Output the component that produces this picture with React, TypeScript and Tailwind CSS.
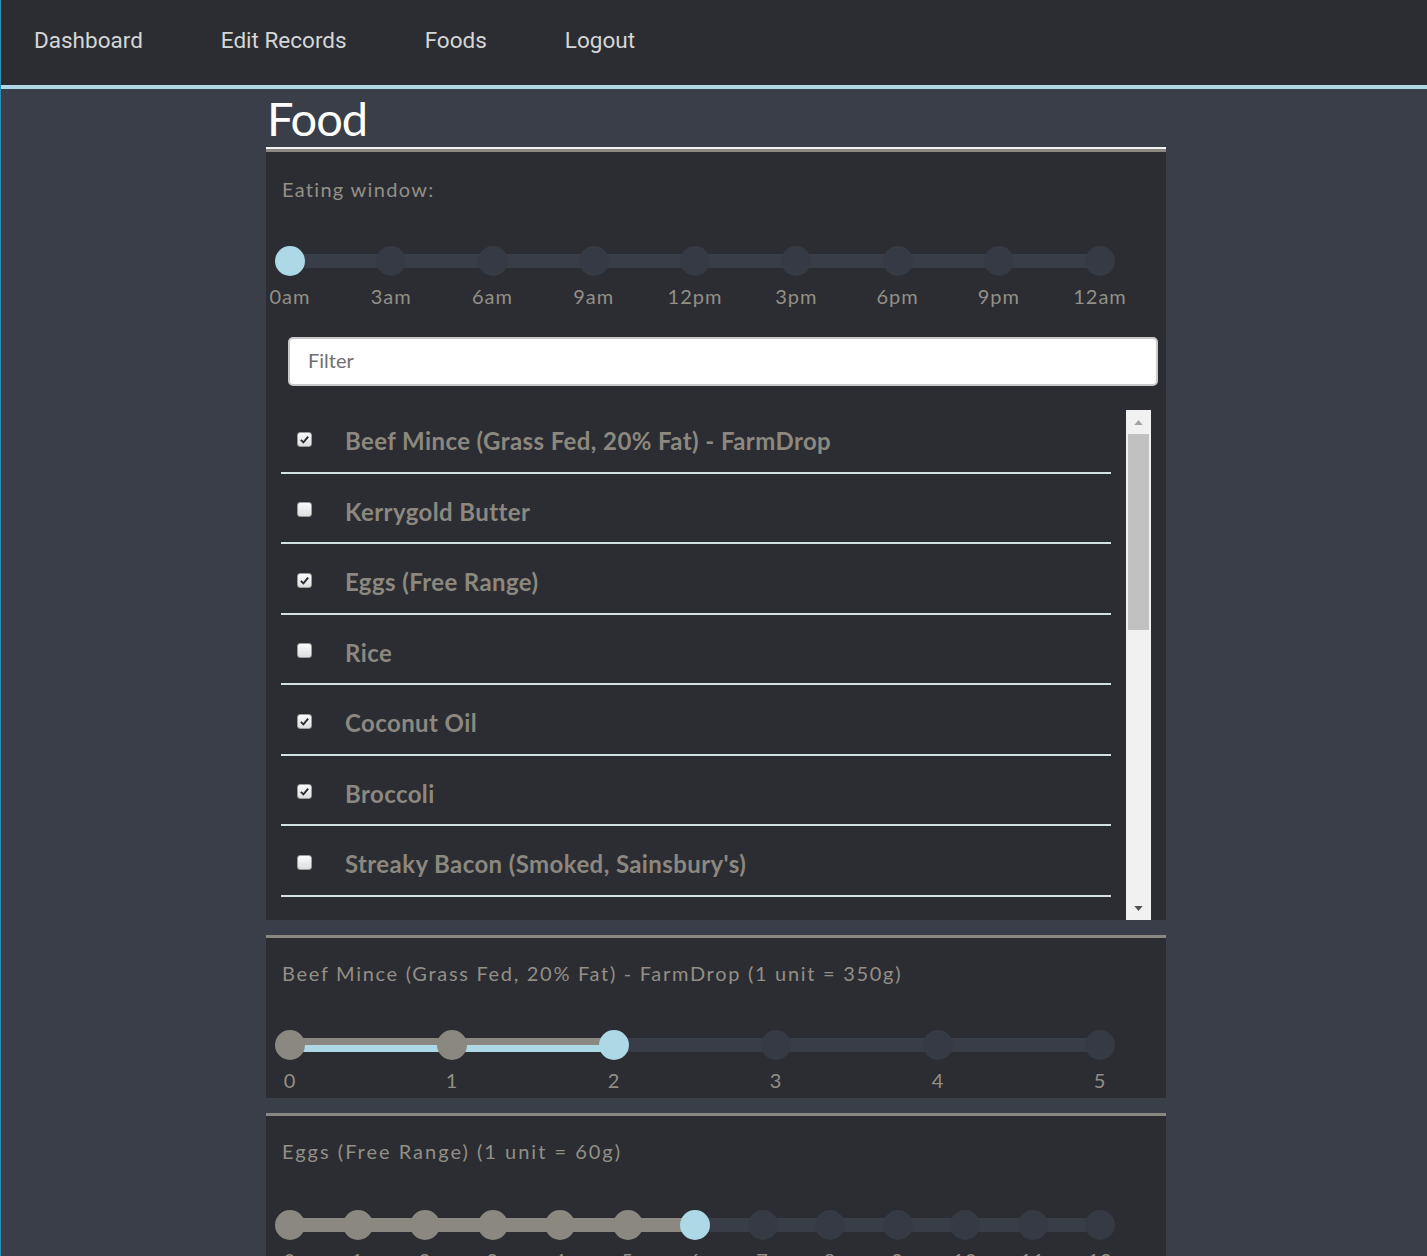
import React from 'react';

const font = "font-['Lato',sans-serif]";

const navLinks = ['Dashboard', 'Edit Records', 'Foods', 'Logout'];

const hours = ['0am', '3am', '6am', '9am', '12pm', '3pm', '6pm', '9pm', '12am'];

const foods = [
  { name: 'Beef Mince (Grass Fed, 20% Fat) - FarmDrop', checked: true },
  { name: 'Kerrygold Butter', checked: false },
  { name: 'Eggs (Free Range)', checked: true },
  { name: 'Rice', checked: false },
  { name: 'Coconut Oil', checked: true },
  { name: 'Broccoli', checked: true },
  { name: "Streaky Bacon (Smoked, Sainsbury's)", checked: false },
];

interface SliderProps {
  labels: string[];
  value: number;
  stripe?: boolean;
}

const Slider = ({ labels, value, stripe }: SliderProps) => {
  const frac = value / (labels.length - 1);
  return (
    <div className="ml-[9px] mr-[51px]">
      <div className="relative h-[30px]">
        <div className="absolute left-[15px] right-[15px] top-[8px] h-[14px] bg-[#393d47]" />
        {value > 0 && (
          <div
            className="absolute left-[15px] top-[8px] h-[14px] bg-[#8a8880]"
            style={{ width: `calc((100% - 30px) * ${frac})` }}
          >
            {stripe && <div className="absolute left-0 right-0 top-[7px] h-[7px] bg-[#add8e6]" />}
          </div>
        )}
        <div className="relative flex justify-between">
          {labels.map((l, i) => (
            <div
              key={l}
              className={
                i === value
                  ? 'h-[30px] w-[30px] rounded-full bg-[#add8e6]'
                  : i < value
                    ? 'h-[30px] w-[30px] rounded-full bg-[#8a8880]'
                    : 'h-[30px] w-[30px] rounded-full bg-[#363a44]'
              }
            />
          ))}
        </div>
      </div>
      <div className="mt-[8px] flex justify-between">
        {labels.map((l) => (
          <div key={l} className="flex w-[30px] justify-center whitespace-nowrap text-[20px] leading-[24px] tracking-[1px] text-[#948f86]">
            {l}
          </div>
        ))}
      </div>
    </div>
  );
};

const CheckBox = ({ checked }: { checked: boolean }) => (
  <span className="flex h-[15px] w-[15px] items-center justify-center rounded-[3px] border border-[#9c9c9c] bg-gradient-to-b from-[#fbfbfb] to-[#dedede]">
    {checked && (
      <svg viewBox="0 0 12 12" className="h-[11px] w-[11px]">
        <path d="M2 6.5 L4.8 9.2 L10 2.8" fill="none" stroke="#2b2b2b" strokeWidth="2" />
      </svg>
    )}
  </span>
);

const Scrollbar = () => (
  <div className="flex w-[25px] flex-col items-center bg-[#f1f1f1]">
    <div className="flex h-[24px] items-center justify-center">
      <svg viewBox="0 0 10 6" className="h-[5px] w-[9px]">
        <path d="M0 6 L5 0 L10 6 Z" fill="#a3a3a3" />
      </svg>
    </div>
    <div className="h-[196px] w-[21px] bg-[#c1c1c1]" />
    <div className="flex-1" />
    <div className="flex h-[24px] items-center justify-center">
      <svg viewBox="0 0 10 6" className="h-[5px] w-[9px]">
        <path d="M0 0 L10 0 L5 6 Z" fill="#505050" />
      </svg>
    </div>
  </div>
);

const label = 'pl-[16px] text-[20px] leading-[24px] text-[#948f86]';

export default function App() {
  return (
    <div className={`${font} min-h-screen border-l border-[#2a8fb6] bg-[#3a3e48]`}>
      <nav className="flex h-[89px] items-center gap-[78px] border-b-4 border-[#add8e6] bg-[#2b2d33] pb-[3px] pl-[33px] font-['Roboto',sans-serif] text-[22.5px] text-[#d6d6d6]">
        {navLinks.map((n) => (
          <span key={n}>{n}</span>
        ))}
      </nav>

      <main className="ml-[265px] w-[900px]">
        <h1 className="h-[58px] pl-[1px] text-[47px] leading-[58px] tracking-[-1px] text-white">Food</h1>
        <div className="h-[2px] bg-[#f2f2f2]" />

        <section className="border-t-[3px] border-[#8a8880] bg-[#2b2d33] pt-[25px]">
          <p className={`${label} tracking-[1.3px]`}>Eating window:</p>
          <div className="mt-[45px]">
            <Slider labels={hours} value={0} />
          </div>
          <div className="mt-[29px] pl-[22px] pr-[8px]">
            <input
              placeholder="Filter"
              className="h-[49px] w-full rounded-[5px] border-2 border-[#c9c9c9] bg-white pb-[4px] pl-[18px] text-[20px] text-[#555] outline-none placeholder:text-[#6f6f6f]"
            />
          </div>
          <div className="mt-[24px] ml-[15px] mr-[15px] flex h-[510px]">
            <div className="flex-1 overflow-hidden pr-[15px]">
              <ul className="-mt-[7px]">
                {foods.map((f) => (
                  <li key={f.name} className="flex h-[70.5px] items-center border-b-2 border-[#d3e0e4] pt-[8px]">
                    <span className="ml-[16px] -mt-[4px] w-[48px]">
                      <CheckBox checked={f.checked} />
                    </span>
                    <span className="text-[24px] font-bold tracking-[0.4px] text-[#8c887f]">{f.name}</span>
                  </li>
                ))}
              </ul>
            </div>
            <Scrollbar />
          </div>
        </section>

        <section className="mt-[15px] border-t-[3px] border-[#8a8880] bg-[#2b2d33] pt-[23px] pb-[6px]">
          <p className={`${label} tracking-[1.7px]`}>Beef Mince (Grass Fed, 20% Fat) - FarmDrop (1 unit = 350g)</p>
          <div className="mt-[45px]">
            <Slider labels={['0', '1', '2', '3', '4', '5']} value={2} stripe />
          </div>
        </section>

        <section className="mt-[15px] border-t-[3px] border-[#8a8880] bg-[#2b2d33] pt-[23px] pb-[6px]">
          <p className={`${label} tracking-[2px]`}>Eggs (Free Range) (1 unit = 60g)</p>
          <div className="mt-[47px]">
            <Slider labels={['0', '1', '2', '3', '4', '5', '6', '7', '8', '9', '10', '11', '12']} value={6} />
          </div>
        </section>
      </main>
    </div>
  );
}
